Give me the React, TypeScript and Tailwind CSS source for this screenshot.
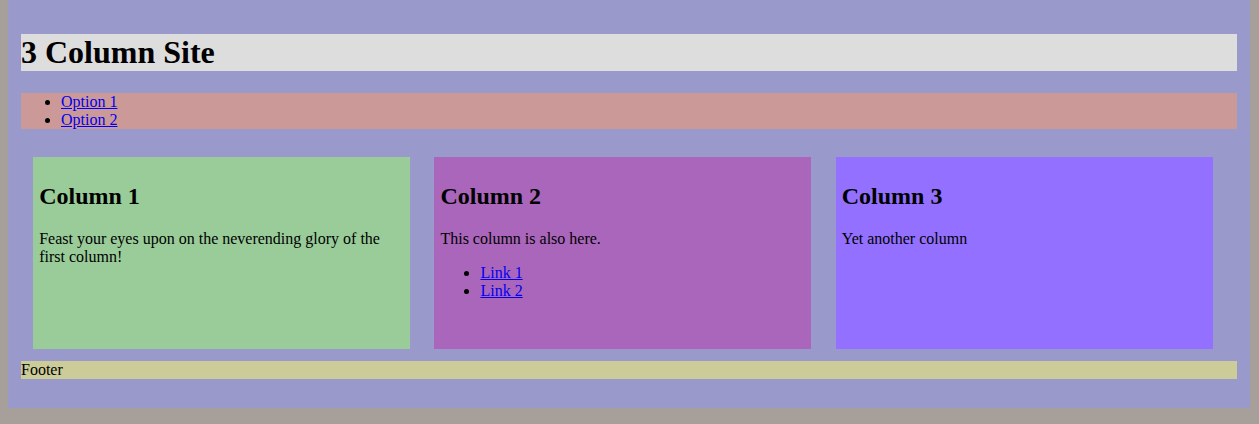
import React from "react";

export default function App() {
  return (
    <div
      className="min-h-screen bg-[#a69f9a] pl-[8px] pr-[9px] pb-[16px] text-[16px] leading-normal text-black"
      style={{ fontFamily: '"Liberation Serif", "Times New Roman", serif' }}
    >
      <div className="bg-[#9999cc] px-[13px] pt-[13px] pb-[13px]">
        <div className="mt-[21.44px] bg-[#dddddd]">
          <h1 className="text-[32px] font-bold leading-[36.8px]">3 Column Site</h1>
        </div>
        <ul className="mt-[21.44px] list-disc bg-[#cc9999] pl-[40px] leading-[18.4px]">
          <li>
            <a href="#" className="text-[#0000ee] underline">Option 1</a>
          </li>
          <li>
            <a href="#" className="text-[#0000ee] underline">Option 2</a>
          </li>
        </ul>
        <div className="mt-[28px] flex">
          <div className="mx-[1%] box-border h-[192px] w-[31%] bg-[#99cc99] p-[6px]">
            <h2 className="mt-[19.92px] text-[24px] font-bold leading-[27px]">Column 1</h2>
            <p className="mt-[19.5px] leading-[18px]">
              Feast your eyes upon on the neverending glory of the first column!
            </p>
          </div>
          <div className="mx-[1%] box-border h-[192px] w-[31%] bg-[#aa66bb] p-[6px]">
            <h2 className="mt-[19.92px] text-[24px] font-bold leading-[27px]">Column 2</h2>
            <p className="mt-[19.5px] leading-[18px]">This column is also here.</p>
            <ul className="mt-[16px] list-disc pl-[40px] leading-[18px]">
              <li>
                <a href="#" className="text-[#0000ee] underline">Link 1</a>
              </li>
              <li>
                <a href="#" className="text-[#0000ee] underline">Link 2</a>
              </li>
            </ul>
          </div>
          <div className="mx-[1%] box-border h-[192px] w-[31%] bg-[#9370ff] p-[6px]">
            <h2 className="mt-[19.92px] text-[24px] font-bold leading-[27px]">Column 3</h2>
            <p className="mt-[19.5px] leading-[18px]">Yet another column</p>
          </div>
        </div>
        <div className="mt-[12px] mb-[16px] bg-[#cccc99] leading-[18px]">Footer</div>
      </div>
    </div>
  );
}
